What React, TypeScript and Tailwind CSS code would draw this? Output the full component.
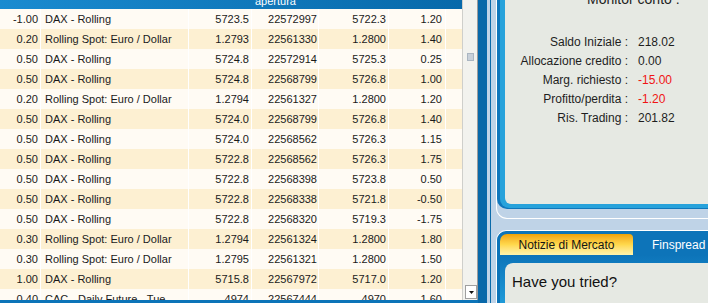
import React from "react";

type Row = [string, string, string, string, string, string];

const rows: Row[] = [
  ["-1.00", "DAX - Rolling", "5723.5", "22572997", "5722.3", "1.20"],
  ["0.20", "Rolling Spot: Euro / Dollar", "1.2793", "22561330", "1.2800", "1.40"],
  ["0.50", "DAX - Rolling", "5724.8", "22572914", "5725.3", "0.25"],
  ["0.50", "DAX - Rolling", "5724.8", "22568799", "5726.8", "1.00"],
  ["0.20", "Rolling Spot: Euro / Dollar", "1.2794", "22561327", "1.2800", "1.20"],
  ["0.50", "DAX - Rolling", "5724.0", "22568799", "5726.8", "1.40"],
  ["0.50", "DAX - Rolling", "5724.0", "22568562", "5726.3", "1.15"],
  ["0.50", "DAX - Rolling", "5722.8", "22568562", "5726.3", "1.75"],
  ["0.50", "DAX - Rolling", "5722.8", "22568398", "5723.8", "0.50"],
  ["0.50", "DAX - Rolling", "5722.8", "22568338", "5721.8", "-0.50"],
  ["0.50", "DAX - Rolling", "5722.8", "22568320", "5719.3", "-1.75"],
  ["0.30", "Rolling Spot: Euro / Dollar", "1.2794", "22561324", "1.2800", "1.80"],
  ["0.30", "Rolling Spot: Euro / Dollar", "1.2795", "22561321", "1.2800", "1.50"],
  ["1.00", "DAX - Rolling", "5715.8", "22567972", "5717.0", "1.20"],
  ["-0.40", "CAC - Daily Future - Tue", "4974", "22567444", "4970", "1.60"],
];

const summary: [string, string, boolean][] = [
  ["Saldo Iniziale :", "218.02", false],
  ["Allocazione credito :", "0.00", false],
  ["Marg. richiesto :", "-15.00", true],
  ["Profitto/perdita :", "-1.20", true],
  ["Ris. Trading :", "201.82", false],
];

export default function App() {
  return (
    <div
      className="flex h-[303px] w-[708px] overflow-hidden bg-[#bfd3e7]"
      style={{ fontFamily: '"Liberation Sans", Arial, sans-serif' }}
    >
      {/* Left: table + scrollbar */}
      <div className="flex w-[478px] shrink-0 flex-col">
        <div className="flex h-[300px] overflow-hidden">
          <div className="flex w-[462px] flex-col overflow-hidden">
            <div className="flex h-[9px] shrink-0 overflow-hidden bg-gradient-to-r from-[#1a8bd0] to-[#0769aa] pl-[255px]">
              <span className="mt-[-5px] text-[11px] leading-[13px] text-white">apertura</span>
            </div>
            {rows.map((r, i) => (
              <div
                key={i}
                className={
                  "grid h-[20px] shrink-0 grid-cols-[40px_148px_63px_67px_70px_57px_17px] text-[11px] leading-[20px] text-[#1a1a1a] " +
                  (i % 2 === 1 ? "bg-[#fdf0d2]" : "bg-[#fffbf4]")
                }
              >
                <div className="pr-[2px] text-right">{r[0]}</div>
                <div className="whitespace-nowrap border-l border-white pl-[4px]">{r[1]}</div>
                <div className="border-l border-white pr-[2px] text-right">{r[2]}</div>
                <div className="border-l border-white pr-[1px] text-right">{r[3]}</div>
                <div className="border-l border-white pr-[2px] text-right">{r[4]}</div>
                <div className="border-l border-white pr-[3px] text-right">{r[5]}</div>
                <div className="border-l border-white"></div>
              </div>
            ))}
          </div>
          {/* Scrollbar */}
          <div className="flex w-[16px] flex-col border-l border-r border-l-[#cfcfcb] border-r-[#9c9c9c] bg-[#f2f2ee]">
            <div className="ml-[4px] mt-[53px] h-[8px] w-[7px] border border-[#aab5c1] bg-[#c8d0d9]"></div>
            <div className="mb-[1px] ml-[2px] mt-auto flex h-[14px] w-[12px] items-center justify-center border border-[#9f9f9f] bg-white">
              <svg width="5" height="3" viewBox="0 0 5 3">
                <path d="M0 0 L5 0 L2.5 3 Z" fill="#111" />
              </svg>
            </div>
          </div>
        </div>
        <div className="h-[3px] bg-[#0c74b8]"></div>
      </div>

      {/* Dark blue strip */}
      <div className="w-[9px] shrink-0 bg-[#0868a9]"></div>
      <div className="w-[3px] shrink-0 bg-[#bfd3e7]"></div>
      <div className="w-[1px] shrink-0 bg-[#0a6aaa]"></div>
      <div className="w-[5px] shrink-0 bg-[#bfd3e7]"></div>

      {/* Right panels */}
      <div className="flex w-[230px] shrink-0 flex-col">
        {/* Top panel */}
        <div className="h-[219px] shrink-0 rounded-bl-[11px] border-b border-l border-white">
          <div className="h-full rounded-bl-[10px] bg-[#0f77bc] pb-[1px] pl-[3px]">
            <div className="h-full rounded-bl-[9px] bg-[#27a2db] pb-[4px] pl-[5px]">
              <div className="h-full rounded-bl-[6px] bg-[#e6e9e3] text-[#1e1e1e]">
                <div className="mt-[-9px] pl-[82px] text-[14px] leading-[16px]">Monitor conto :</div>
                <div className="mt-[26px] grid grid-cols-[123px_auto] gap-x-[10px] text-[12px] leading-[19px]">
                  {summary.map(([l, v, red]) => (
                    <React.Fragment key={l}>
                      <div className="whitespace-nowrap text-right">{l}</div>
                      <div className={red ? "text-[#f01414]" : "text-[#1e1e1e]"}>{v}</div>
                    </React.Fragment>
                  ))}
                </div>
              </div>
            </div>
          </div>
        </div>

        {/* Bottom panel */}
        <div className="mt-[11px] flex flex-1 flex-col rounded-tl-[10px] border-l border-t border-white bg-[#0d74b9]">
          <div className="flex flex-1 flex-col rounded-tl-[9px] pl-[3px] pt-[3px]">
            <div className="flex h-[21px] shrink-0 items-center">
              <div className="flex h-full w-[133px] items-center justify-center rounded-tl-[7px] rounded-tr-[4px] bg-gradient-to-b from-[#f0a300] via-[#ffd84c] to-[#fff4ac] text-[12px] text-[#141414]">
                Notizie di Mercato
              </div>
              <div className="ml-[19px] text-[12px] text-white">Finspread</div>
            </div>
            <div className="flex flex-1 flex-col bg-gradient-to-b from-[#0d74b9] to-[#1f9ad8] pl-[5px] pt-[8px]">
              <div className="flex-1 rounded-tl-[8px] bg-[#e6e9e3] pl-[7px] pt-[9px] text-[15px] leading-[20px] text-[#111]">
                Have you tried?
              </div>
            </div>
          </div>
        </div>
      </div>
    </div>
  );
}
